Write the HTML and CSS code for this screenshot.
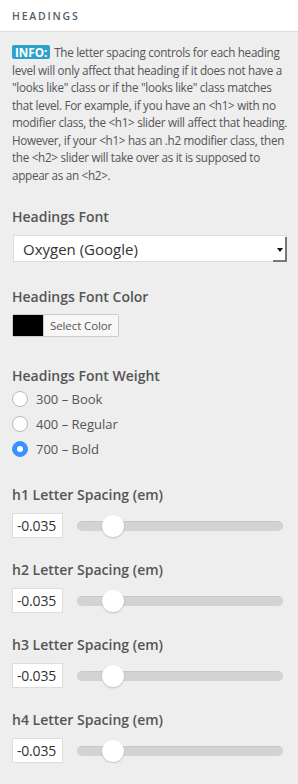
FILE: index.html
```html
<!DOCTYPE html>
<html lang="en">
<head>
    <meta charset="UTF-8">
    <meta name="viewport" content="width=device-width, initial-scale=1.0">
    <title>Headings</title>
    <link rel="stylesheet" href="styles.css">
</head>
<body>
    <div class="section-title">Headings</div>

    <div class="panel">
        <p class="info"><span class="badge">INFO:</span> The letter spacing controls for each heading<br>level will only affect that heading if it does not have a<br>"looks like" class or if the "looks like" class matches<br>that level. For example, if you have an &lt;h1&gt; with no<br>modifier class, the &lt;h1&gt; slider will affect that heading.<br>However, if your &lt;h1&gt; has an .h2 modifier class, then<br>the &lt;h2&gt; slider will take over as it is supposed to<br>appear as an &lt;h2&gt;.</p>

        <div class="control font">
            <label class="control-label">Headings Font</label>
            <div class="select">
                <span class="select-value">Oxygen (Google)</span>
                <span class="select-arrow"></span>
            </div>
        </div>

        <div class="control color">
            <label class="control-label">Headings Font Color</label>
            <button type="button" class="color-btn">
                <span class="swatch"></span>
                <span class="color-text">Select Color</span>
            </button>
        </div>

        <div class="control weight">
            <label class="control-label">Headings Font Weight</label>
            <label class="radio"><span class="dot"></span>300 – Book</label>
            <label class="radio"><span class="dot"></span>400 – Regular</label>
            <label class="radio"><span class="dot checked"></span>700 – Bold</label>
        </div>

        <div class="control first-range">
            <label class="control-label">h1 Letter Spacing (em)</label>
            <div class="range-row">
                <div class="num">-0.035</div>
                <div class="track"><span class="thumb"></span></div>
            </div>
        </div>

        <div class="control">
            <label class="control-label">h2 Letter Spacing (em)</label>
            <div class="range-row">
                <div class="num">-0.035</div>
                <div class="track"><span class="thumb"></span></div>
            </div>
        </div>

        <div class="control">
            <label class="control-label">h3 Letter Spacing (em)</label>
            <div class="range-row">
                <div class="num">-0.035</div>
                <div class="track"><span class="thumb"></span></div>
            </div>
        </div>

        <div class="control">
            <label class="control-label">h4 Letter Spacing (em)</label>
            <div class="range-row">
                <div class="num">-0.035</div>
                <div class="track"><span class="thumb"></span></div>
            </div>
        </div>
    </div>
</body>
</html>
```

FILE: styles.css
```css
body {
    font-family: 'Open Sans', sans-serif;
    margin: 0;
    background-color: #eeeeee;
    color: #555;
}

.section-title {
    background-color: #fff;
    border-bottom: 1px solid #ddd;
    height: 31px;
    line-height: 32px;
    padding-left: 12px;
    font-size: 10.5px;
    font-weight: 600;
    letter-spacing: 1.8px;
    text-transform: uppercase;
    color: #555d66;
}

.panel {
    padding: 12px 10px 0 12px;
}

.info {
    margin: 0;
    font-size: 11.7px;
    line-height: 17.5px;
    color: #555;
    letter-spacing: -0.3px;
    white-space: nowrap;
}

.badge {
    display: inline-block;
    background-color: #2ea2cc;
    color: #fff;
    font-weight: 700;
    padding: 0 3px;
    margin-right: 1px;
    line-height: 14px;
    letter-spacing: 0;
    border-radius: 2px;
}

.control {
    margin-top: 22px;
}

.font {
    margin-top: 23px;
}

.color {
    margin-top: 25px;
}

.weight {
    margin-top: 29px;
}

.first-range {
    margin-top: 24px;
}

.control-label {
    display: block;
    font-size: 14px;
    font-weight: 600;
    color: #555;
    line-height: 20px;
    margin-bottom: 8px;
}

.color .control-label {
    margin-bottom: 7px;
}

.weight .control-label {
    margin-bottom: 0;
}

.select {
    display: flex;
    align-items: center;
    height: 27px;
    margin-left: 1px;
    margin-right: 1px;
    background-color: #fff;
    border: 1px solid #ddd;
    box-sizing: border-box;
}

.select-value {
    flex: 1;
    padding-left: 9px;
    font-size: 15px;
    color: #333;
}

.select-arrow {
    width: 14px;
    height: 25px;
    border-right: 2px solid #777;
    border-bottom: 2px solid #777;
    box-sizing: border-box;
    margin-right: -1px;
    margin-bottom: -1px;
    position: relative;
}

.select-arrow::after {
    content: "";
    position: absolute;
    left: 4px;
    top: 11px;
    border-left: 3px solid transparent;
    border-right: 3px solid transparent;
    border-top: 4px solid #111;
}

.color-btn {
    display: flex;
    align-items: stretch;
    padding: 0;
    height: 23px;
    border: 1px solid #ccc;
    border-radius: 2px;
    background-color: #f7f7f7;
    font-family: 'Open Sans', sans-serif;
    cursor: pointer;
}

.swatch {
    width: 30px;
    background-color: #000;
}

.color-text {
    padding: 0 6px 0 6px;
    font-size: 11.5px;
    letter-spacing: -0.1px;
    line-height: 21px;
    color: #555;
    border-left: 1px solid #ccc;
}

.radio {
    display: flex;
    align-items: center;
    height: 25px;
    font-size: 13px;
    color: #555;
}

.dot {
    width: 16px;
    height: 16px;
    border-radius: 50%;
    border: 1px solid #b4b9be;
    background-color: #fff;
    box-sizing: border-box;
    margin-right: 8px;
    position: relative;
}

.dot.checked {
    background-color: #3993ff;
    border-color: #3993ff;
}

.dot.checked::after {
    content: "";
    position: absolute;
    left: 4px;
    top: 4px;
    width: 6px;
    height: 6px;
    border-radius: 50%;
    background-color: #fff;
}

.range-row {
    display: flex;
    align-items: center;
}

.num {
    width: 51px;
    height: 25px;
    box-sizing: border-box;
    background-color: #fff;
    border: 1px solid #ddd;
    font-size: 14px;
    line-height: 23px;
    padding-left: 4px;
    letter-spacing: -0.2px;
    color: #333;
}

.track {
    flex: 1;
    height: 9px;
    margin-left: 14px;
    margin-right: 5px;
    border-radius: 5px;
    background-color: #d3d3d3;
    border-top: 1px solid #c8c8c8;
    position: relative;
}

.thumb {
    position: absolute;
    left: 25px;
    top: -7px;
    width: 22px;
    height: 22px;
    border-radius: 50%;
    background-color: #fff;
    box-shadow: 0 1px 2px rgba(0, 0, 0, 0.2);
}
```
